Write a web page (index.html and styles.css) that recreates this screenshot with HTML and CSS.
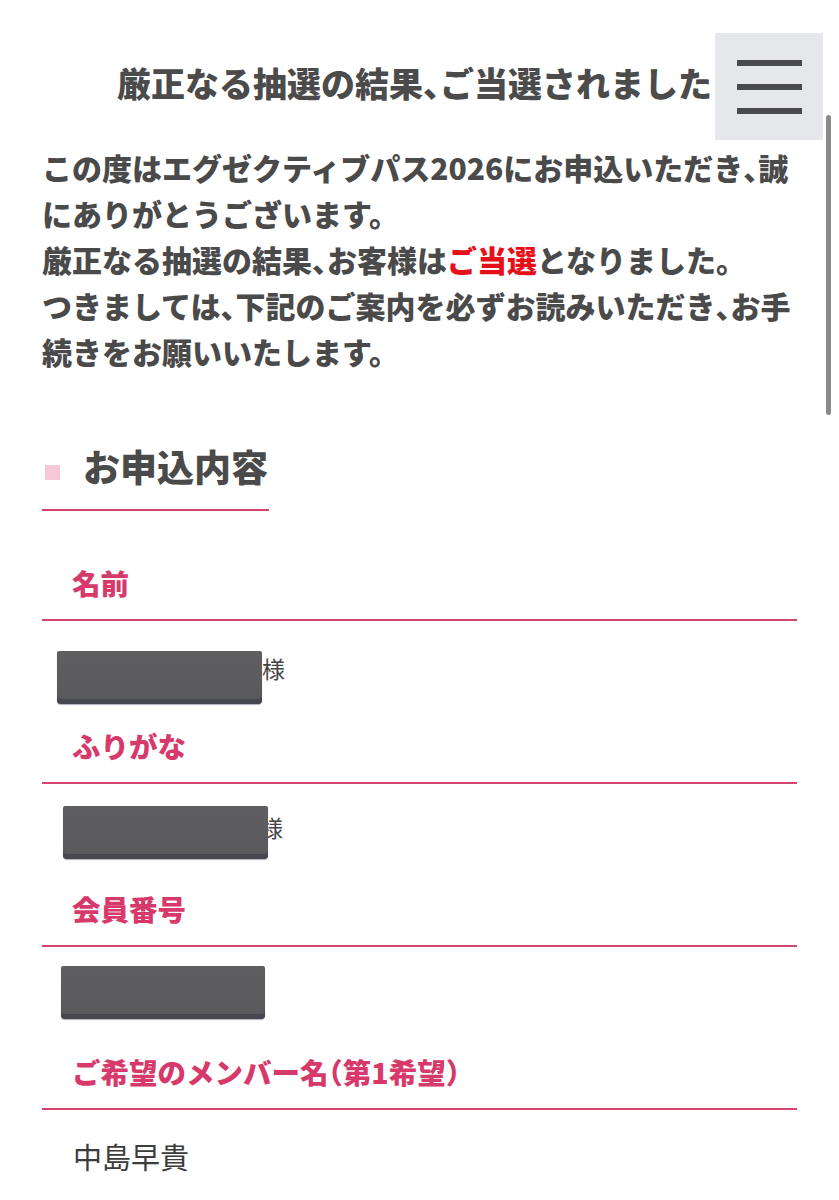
FILE: index.html
```html
<!DOCTYPE html>
<html lang="ja">
<head>
<meta charset="utf-8">
<title>当選のご案内</title>
<link rel="stylesheet" href="styles.css">
</head>
<body>
<main class="page">
  <h1 class="title">厳正なる抽選の結果<span class="c">、</span>ご当選されました</h1>
  <p class="lead">この度はエグゼクティブパス2026にお申込いただき<span class="c">、</span>誠にありがとうございます。<br>厳正なる抽選の結果<span class="c">、</span>お客様は<span class="hl">ご当選</span>となりました。<br>つきましては<span class="c">、</span>下記のご案内を必ずお読みいただき<span class="c">、</span>お手続きをお願いいたします。</p>

  <h2 class="section-title"><span class="sq"></span><span>お申込内容</span></h2>

  <dl class="info">
    <dt>名前</dt>
    <dd class="row"><span class="redact r1"></span><span class="sama">様</span></dd>
    <dt>ふりがな</dt>
    <dd class="row"><span class="redact r2"></span><span class="sama hidden">様</span></dd>
    <dt>会員番号</dt>
    <dd class="row"><span class="redact r3"></span></dd>
    <dt>ご希望のメンバー名<span class="p">（</span>第1希望<span class="p">）</span></dt>
    <dd class="text">中島早貴</dd>
  </dl>
</main>

<button class="menu" aria-label="メニュー"><span></span><span></span><span></span></button>
<div class="scrollbar"></div>
</body>
</html>
```

FILE: styles.css
```css
html, body {
  margin: 0;
  padding: 0;
  background: #ffffff;
}

body {
  font-family: "Noto Sans CJK JP", "Noto Sans", sans-serif;
  color: #4a4a4a;
}

.p {
  font-feature-settings: "halt";
}

.c {
  letter-spacing: -0.5em;
}

.page {
  padding: 59px 42px 0;
}

.title {
  margin: 0;
  padding-right: 10px;
  font-size: 34px;
  line-height: 48px;
  font-weight: 900;
  text-align: center;
  color: #4b4b4b;
}

.lead {
  margin: 37px 0 0;
  font-size: 30px;
  line-height: 46px;
  font-weight: 900;
  color: #4a4a4a;
}

.lead .hl {
  color: #e6101a;
}

.section-title {
  display: inline-flex;
  align-items: center;
  margin: 68px 0 0;
  padding: 0 1px 19px 3px;
  font-size: 37px;
  line-height: 48px;
  font-weight: 900;
  color: #4a4a4a;
  border-bottom: 2px solid #d4456e;
  gap: 23px;
}

.section-title .sq {
  width: 15px;
  height: 15px;
  background: #f6c7d6;
  margin-top: 13px;
}

.info {
  margin: 53px 0 0;
}

.info dt {
  margin: 0;
  padding: 0 0 17px 30px;
  font-size: 28.5px;
  line-height: 38px;
  font-weight: 900;
  color: #d6396a;
  border-bottom: 2px solid #d2466f;
}

.info dd {
  margin: 0;
}

.info dd.row {
  height: 106px;
  display: flex;
  align-items: flex-start;
}

.redact {
  position: relative;
  z-index: 1;
  display: block;
  width: 205px;
  height: 53px;
  background: linear-gradient(#5f5f62, #59595c);
  border-radius: 2px 2px 4px 4px;
  box-shadow: inset 0 -5px 0 #47474f, 0 1px 1px rgba(60, 60, 90, 0.4);
}

.redact.r1 { margin: 30px 0 0 15px; }
.redact.r2 { margin: 22px 0 0 21px; }
.redact.r3 { margin: 19px 0 0 19px; width: 204px; }

.sama {
  margin-top: 30px;
  font-size: 23px;
  line-height: 34px;
  color: #444;
}

.sama.hidden {
  margin: 26px 0 0 -8px;
}

.info dd.text {
  padding: 29px 0 0 31px;
  font-size: 29px;
  line-height: 34px;
  color: #3c3c3c;
}

.menu {
  position: absolute;
  top: 33px;
  left: 715px;
  width: 108px;
  height: 107px;
  border: 0;
  padding: 0;
  background: #e6e7eb;
  display: flex;
  flex-direction: column;
  align-items: center;
  justify-content: center;
  gap: 18px;
}

.menu span {
  display: block;
  width: 65px;
  height: 6px;
  background: #4a4a4e;
}

.scrollbar {
  position: fixed;
  top: 115px;
  left: 826px;
  width: 5px;
  height: 300px;
  border-radius: 3px;
  background: #8a8a8a;
}
```
